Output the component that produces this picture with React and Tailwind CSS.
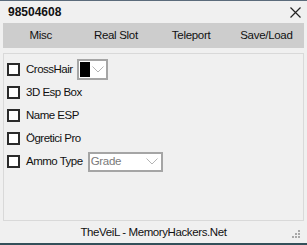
export default function App() {
  const font = { fontFamily: '"Liberation Sans", Arial, sans-serif' };
  const Check = () => (
    <div className="w-[13px] h-[13px] border-2 border-[#2a2a2a] bg-white shrink-0" />
  );
  const Chevron = ({ color = "#a8a8a8" }) => (
    <svg width="12" height="7" viewBox="0 0 12 7" className="shrink-0">
      <path d="M0.5 0.5 L6 6 L11.5 0.5" fill="none" stroke={color} strokeWidth="1" />
    </svg>
  );
  const Row = ({ label, children }) => (
    <div className="h-[23px] flex items-center">
      <Check />
      <span className="ml-[6px] text-[11.5px] tracking-[-0.5px] text-[#111]">{label}</span>
      {children}
    </div>
  );
  return (
    <div
      className="w-[307px] h-[245px] bg-[#f0f0f0] flex flex-col relative overflow-hidden"
      style={font}
    >
      <div className="h-[1px] bg-[#5b6b7b]" />
      <div className="h-[22px] flex items-center justify-between pl-[8px] pr-[6px]">
        <span className="text-[12px] font-bold text-[#111] leading-none">98504608</span>
        <svg width="11" height="11" viewBox="0 0 11 11">
          <path d="M0.5 0.5 L10.5 10.5 M10.5 0.5 L0.5 10.5" stroke="#222" strokeWidth="1.2" />
        </svg>
      </div>
      <div className="mx-[3px] h-[25px] bg-[#cdcdcd] grid grid-cols-4 items-center text-center text-[11.5px] tracking-[-0.3px] text-[#111]">
        <span>Misc</span>
        <span>Real Slot</span>
        <span>Teleport</span>
        <span>Save/Load</span>
      </div>
      <div className="mx-[3px] mt-[5px] h-[168px] border border-[#d9d9d9] pl-[3px] pt-[4px]">
        <Row label="CrossHair">
          <div className="ml-[4px] w-[31px] h-[21px] border-2 border-[#a5a5a5] bg-white flex items-center pl-[1px] gap-[2px]">
            <div className="w-[10px] h-[15px] bg-black" />
            <Chevron color="#b4b4b4" />
          </div>
        </Row>
        <Row label="3D Esp Box" />
        <Row label="Name ESP" />
        <Row label="Ögretici Pro" />
        <Row label="Ammo Type">
          <div className="ml-[5px] w-[75px] h-[20px] border-2 border-[#a5a5a5] bg-white flex items-center justify-between pl-[1px] pr-[3px]">
            <span className="text-[11.5px] tracking-[-0.3px] text-[#7a7a7a]">Grade</span>
            <Chevron color="#b4b4b4" />
          </div>
        </Row>
      </div>
      <div className="h-[22px] pt-[1px] flex items-center justify-center text-[11.5px] tracking-[-0.4px] text-[#111]">
        TheVeiL - MemoryHackers.Net
      </div>
      <div className="flex-1 bg-[#34505a]" />
      <div className="absolute left-[292px] top-[230px] w-[8px] h-[8px]">
        <div className="absolute left-[6px] top-0 w-[2px] h-[2px] bg-[#a8a8a8]" />
        <div className="absolute left-[3px] top-[3px] w-[2px] h-[2px] bg-[#a8a8a8]" />
        <div className="absolute left-[6px] top-[3px] w-[2px] h-[2px] bg-[#a8a8a8]" />
        <div className="absolute left-0 top-[6px] w-[2px] h-[2px] bg-[#a8a8a8]" />
        <div className="absolute left-[3px] top-[6px] w-[2px] h-[2px] bg-[#a8a8a8]" />
        <div className="absolute left-[6px] top-[6px] w-[2px] h-[2px] bg-[#a8a8a8]" />
      </div>
    </div>
  );
}
